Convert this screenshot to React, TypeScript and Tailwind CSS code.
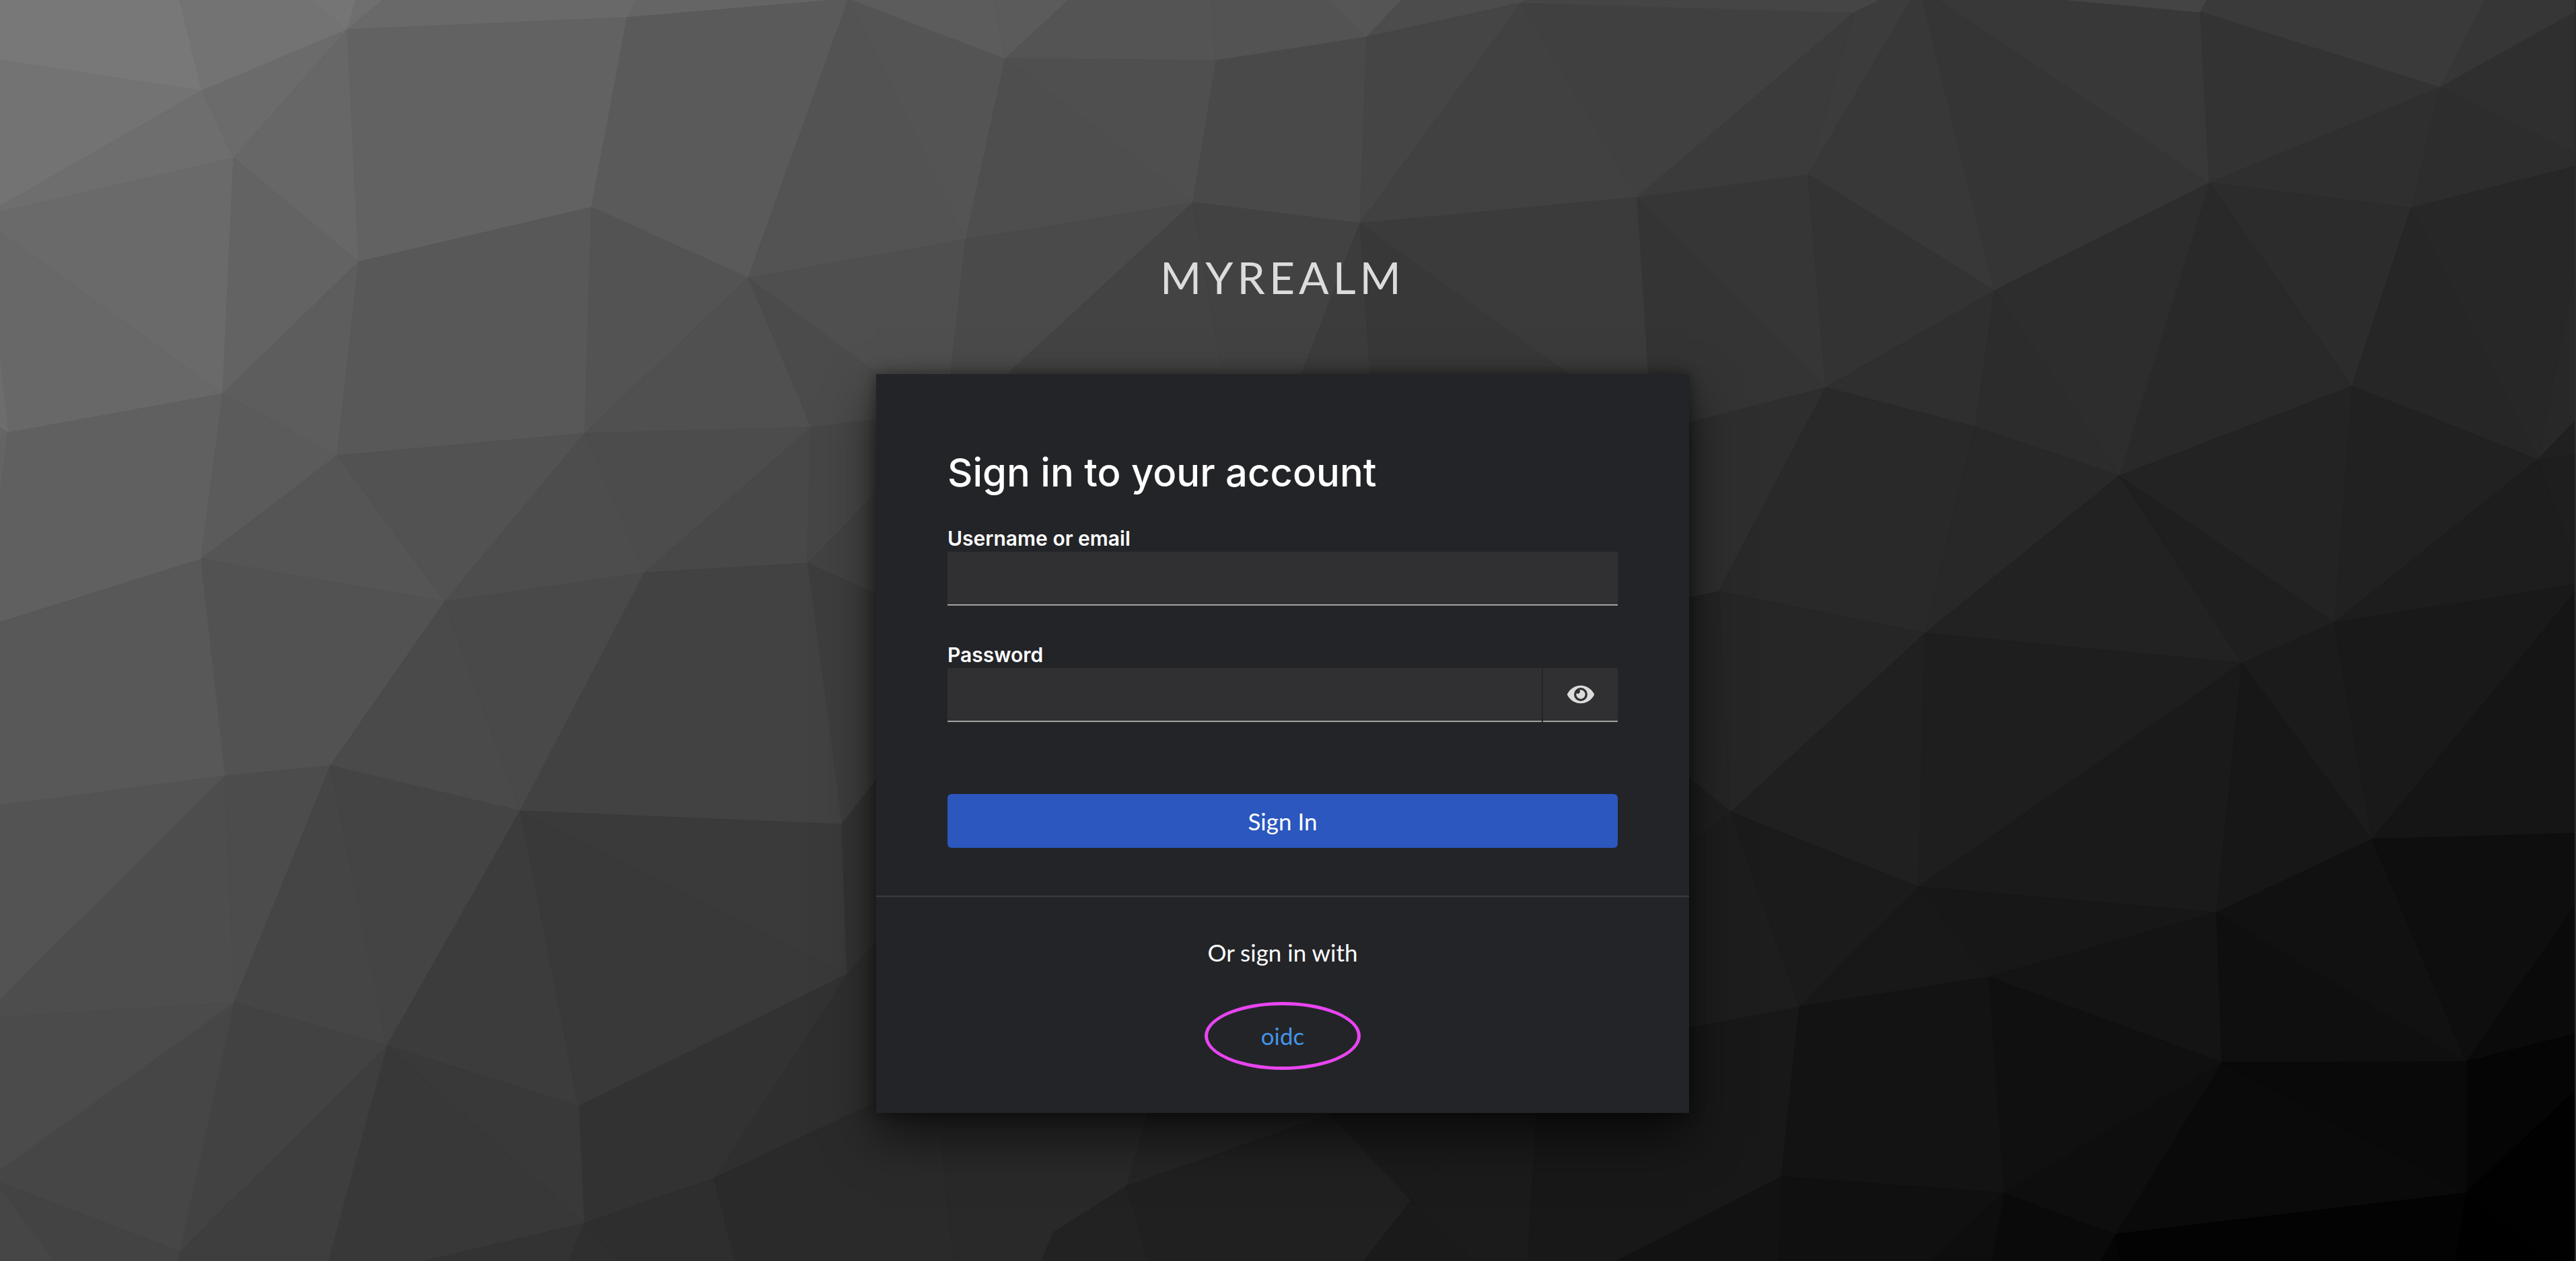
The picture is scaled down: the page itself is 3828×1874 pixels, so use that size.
import { useState } from 'react';
import type { FormEvent } from 'react';
import { FaEye } from 'react-icons/fa';

/* Facets of the low-poly backdrop: [fill, points] on a 3828 x 1874 canvas. */
const facets: [string, string][] = [
  // top left
  ['#787878', '0,0 268,0 301,135 0,89'],
  ['#737373', '268,0 463,0 517,44 301,135'],
  ['#757575', '463,0 530,0 517,44'],
  ['#6f6f6f', '530,0 570,0 517,44'],
  ['#696969', '570,0 947,0 933,26 517,44'],
  ['#656565', '947,0 1262,0 933,26'],
  ['#737373', '0,89 301,135 0,307'],
  ['#6e6e6e', '0,307 301,135 348,235 0,315'],
  ['#6b6b6b', '301,135 517,44 348,235'],
  ['#676767', '517,44 348,235 534,389'],
  ['#626262', '517,44 933,26 880,308 534,389'],
  ['#5a5a5a', '933,26 1262,-2 1113,413 880,308'],
  ['#535353', '1262,-2 1113,413 1436,356'],
  ['#545454', '1262,-2 1495,87 1436,356'],
  ['#6a6a6a', '0,315 348,235 332,585 0,344'],
  ['#686868', '0,344 332,585 13,643 0,526'],
  ['#6d6d6d', '0,526 13,643 0,635'],
  ['#666666', '0,635 13,643 0,655'],
  ['#646464', '0,655 13,643 0,743'],
  ['#636363', '348,235 534,389 332,585'],
  ['#5d5d5d', '534,389 332,585 502,677'],
  ['#585858', '534,389 880,308 870,644 502,677'],
  ['#535353', '880,308 1113,413 870,644'],
  ['#606060', '13,643 332,585 300,831 0,925 0,743'],
  ['#5b5b5b', '332,585 502,677 300,831'],
  ['#555555', '502,677 300,831 662,894'],
  ['#525252', '502,677 870,644 662,894'],
  ['#505050', '1113,413 870,644 1207,635'],
  ['#4f4f4f', '1113,413 1436,356 1411,600 1330,600'],
  ['#4b4b4b', '1113,413 1330,573 1330,620 1207,635'],
  ['#4c4c4c', '870,644 1207,635 959,851'],
  ['#4d4d4d', '870,644 662,894 959,851'],
  ['#484848', '1207,635 1201,837 959,851'],
  ['#464646', '1207,635 1330,620 1330,706 1201,837'],
  ['#424242', '1201,837 1330,706 1330,895'],
  ['#3d3d3d', '1201,837 1330,895 1330,1125 1252,1225'],
  ['#585858', '0,925 300,831 336,1153 0,1197'],
  ['#525252', '300,831 662,894 492,1138 336,1153'],
  // bottom left
  ['#4a4a4a', '662,894 492,1138 774,1205'],
  ['#494949', '662,894 959,851 774,1205'],
  ['#424242', '959,851 1201,837 1252,1225 774,1205'],
  ['#535353', '0,1197 336,1153 0,1487'],
  ['#4d4d4d', '336,1153 0,1487 0,1512 349,1490'],
  ['#4c4c4c', '336,1153 492,1138 349,1490'],
  ['#454545', '492,1138 349,1490 576,1554'],
  ['#444444', '492,1138 576,1554 774,1205'],
  ['#3c3c3c', '774,1205 576,1554 861,1644'],
  ['#393939', '774,1205 861,1644 1260,1448'],
  ['#3a3a3a', '774,1205 1252,1225 1260,1448'],
  ['#333333', '1252,1225 1330,1125 1330,1370 1260,1448'],
  ['#2f2f2f', '1260,1448 1330,1370 1330,1640 1062,1751'],
  ['#323232', '861,1644 1260,1448 1062,1751 869,1818'],
  ['#393939', '576,1554 861,1644 869,1818'],
  ['#383838', '576,1554 869,1818 606,1880 487,1880'],
  ['#3e3e3e', '576,1554 487,1880 265,1880 268,1860'],
  ['#424242', '349,1490 576,1554 268,1860'],
  ['#464646', '349,1490 268,1860 0,1757 0,1739'],
  ['#4b4b4b', '0,1512 349,1490 0,1739'],
  ['#434343', '0,1757 268,1860 265,1880 86,1880 0,1765'],
  ['#464646', '0,1765 86,1880 0,1880'],
  ['#333333', '869,1818 606,1880 844,1880'],
  ['#2f2f2f', '869,1818 844,1880 926,1880'],
  ['#2e2e2e', '869,1818 1062,1751 1095,1880 926,1880'],
  // bottom middle
  ['#2a2a2a', '1062,1751 1095,1880 1419,1880 1393,1630 1320,1630'],
  ['#292929', '1393,1630 1419,1880 1546,1880 1567,1831 1675,1763 1713,1630'],
  ['#252525', '1713,1630 1675,1763 1978,1656 1978,1630'],
  ['#202020', '1675,1763 1978,1656 2098,1784'],
  ['#222222', '1567,1831 1546,1880 1709,1880 1675,1763'],
  ['#202020', '1675,1763 1709,1880 2023,1880 2098,1784'],
  ['#1b1b1b', '1978,1656 1978,1630 2218,1630 2098,1784'],
  ['#1b1b1b', '2098,1784 2218,1630 2286,1630 2271,1880 2197,1880'],
  ['#1a1a1a', '2098,1784 2023,1880 2197,1880'],
  ['#181818', '2286,1630 2480,1630 2480,1533 2675,1496 2648,1749 2392,1880 2271,1880'],
  ['#121212', '2648,1749 2392,1880 2646,1880'],
  // top middle
  ['#5c5c5c', '1262,-2 1478,0 1495,87'],
  ['#5b5b5b', '1478,0 1589,0 1495,87'],
  ['#545454', '1589,0 1801,0 1808,90 1495,87'],
  ['#535353', '1801,0 1975,0 2032,55 1808,90'],
  ['#565656', '1975,0 2021,0 2032,55'],
  ['#555555', '2021,0 2084,0 2032,55'],
  ['#4c4c4c', '2084,0 2270,0 2262,4 2032,55'],
  ['#4e4e4e', '1495,87 1774,301 1436,356'],
  ['#4f4f4f', '1495,87 1808,90 1774,301'],
  ['#494949', '1808,90 2032,55 2022,332 1774,301'],
  ['#454545', '2032,55 2262,4 2022,332'],
  ['#414141', '2262,4 2022,332 2434,293'],
  ['#404040', '2262,4 2756,19 2434,293'],
  ['#454545', '2270,0 2795,0 2756,19 2262,4'],
  ['#4a4a4a', '1436,356 1774,301 1450,600 1409,600'],
  ['#434343', '1774,301 1450,600 1825,600'],
  ['#424242', '1774,301 2022,332 1918,600 1825,600'],
  ['#3c3c3c', '2022,332 1918,600 2040,600'],
  ['#383838', '2022,332 2040,600 2394,600'],
  ['#3b3b3b', '2022,332 2434,293 2456,600 2394,600'],
  ['#343434', '2434,293 2714,576 2480,640 2456,640'],
  // top right
  ['#363636', '2434,293 2688,259 2714,576'],
  ['#3b3b3b', '2434,293 2756,19 2688,259'],
  ['#3c3c3c', '2756,19 2795,0 2853,-20 2688,259'],
  ['#383838', '2853,-20 2688,259 2965,432'],
  ['#353535', '2853,-20 2965,432 3284,272'],
  ['#383838', '2853,-20 3284,272 3271,18'],
  ['#444444', '3073,0 3281,0 3271,18'],
  ['#3a3a3a', '3281,0 3694,0 3627,130 3271,18'],
  ['#363636', '3694,0 3828,0 3828,18 3627,130'],
  ['#2f2f2f', '3627,130 3828,18 3828,228'],
  ['#2d2d2d', '3627,130 3828,228 3828,247 3584,309'],
  ['#333333', '3271,18 3627,130 3284,272'],
  ['#2f2f2f', '3284,272 3627,130 3584,309'],
  ['#2c2c2c', '3284,272 3584,309 3496,574'],
  ['#292929', '3284,272 3496,574 3150,707'],
  ['#2d2d2d', '2965,432 3284,272 3150,707'],
  ['#333333', '2688,259 2965,432 2714,576'],
  ['#2f2f2f', '2965,432 2714,576 2936,634'],
  ['#2c2c2c', '2965,432 2936,634 3150,707'],
  ['#262626', '3584,309 3496,574 3772,683'],
  ['#272727', '3584,309 3828,247 3828,400 3772,683'],
  ['#282828', '3772,683 3828,400 3828,625'],
  ['#202020', '3772,683 3828,625 3828,676'],
  ['#212121', '3496,574 3772,683 3470,925'],
  ['#232323', '3496,574 3150,707 3470,925'],
  ['#1d1d1d', '3772,683 3470,925 3838,867'],
  ['#1e1e1e', '3772,683 3838,676 3838,867'],
  ['#2e2e2e', '2714,576 2555,879 2480,895 2480,636'],
  ['#292929', '2714,576 2936,634 2862,941 2555,879'],
  ['#282828', '2936,634 3150,707 2862,941'],
  // bottom right
  ['#222222', '3150,707 2862,941 3333,985'],
  ['#1f1f1f', '3150,707 3333,985 3470,925'],
  ['#262626', '2555,879 2862,941 2573,1207'],
  ['#252525', '2555,879 2573,1207 2480,1130 2480,895'],
  ['#1f1f1f', '2573,1207 2480,1130 2480,1280'],
  ['#1d1d1d', '2573,1207 2480,1280 2480,1533 2675,1496'],
  ['#202020', '2862,941 2573,1207 2852,1318'],
  ['#1e1e1e', '2862,941 2852,1318 3333,985'],
  ['#1a1a1a', '3333,985 2852,1318 3295,1356'],
  ['#171717', '3333,985 3295,1356 3526,1247'],
  ['#1b1b1b', '3333,985 3470,925 3526,1247'],
  ['#191919', '3470,925 3838,867 3526,1247'],
  ['#151515', '3526,1247 3838,867 3838,1238'],
  ['#1b1b1b', '2573,1207 2852,1318 2675,1496'],
  ['#181818', '2852,1318 2675,1496 2956,1452'],
  ['#171717', '2852,1318 2956,1452 3295,1356'],
  ['#141414', '2956,1452 3295,1356 3303,1579'],
  ['#0f0f0f', '3295,1356 3303,1579 3666,1578'],
  ['#111111', '3295,1356 3526,1247 3666,1578'],
  ['#0e0e0e', '3526,1247 3838,1238 3838,1331 3666,1578'],
  ['#0a0a0a', '3666,1578 3838,1331 3838,1534'],
  ['#050505', '3666,1578 3838,1534 3838,1612 3665,1773'],
  ['#010101', '3665,1773 3838,1612 3838,1880 3796,1880'],
  ['#000000', '3665,1773 3648,1880 3796,1880'],
  ['#090909', '3303,1579 3666,1578 3665,1773'],
  ['#0a0a0a', '3303,1579 3665,1773 3145,1834'],
  ['#030303', '3145,1834 3665,1773 3648,1880 3152,1880'],
  ['#050505', '3145,1834 3118,1880 3152,1880'],
  ['#0a0a0a', '2979,1773 3145,1834 3118,1880 2959,1880'],
  ['#0e0e0e', '2979,1773 3303,1579 3145,1834'],
  ['#101010', '2956,1452 3303,1579 2979,1773'],
  ['#131313', '2675,1496 2956,1452 2979,1773 2648,1749'],
  ['#101010', '2648,1749 2979,1773 2864,1880 2646,1880'],
  ['#0e0e0e', '2979,1773 2864,1880 2959,1880'],
];

function Backdrop() {
  return (
    <svg
      className="absolute inset-0 -z-10 h-full w-full"
      viewBox="0 0 3828 1874"
      preserveAspectRatio="xMidYMid slice"
      aria-hidden="true"
    >
      {facets.map(([fill, points]) => (
        <polygon key={points} points={points} fill={fill} stroke={fill} strokeWidth="1" strokeLinejoin="round" />
      ))}
    </svg>
  );
}

const labelClass = "block font-['Inter','Liberation_Sans',sans-serif] text-[30px] leading-10 font-semibold text-white";
const inputClass =
  'block h-20 w-full min-w-0 border-b-2 border-[#a3a3a3] bg-[#303032] px-4 text-[35px] text-white outline-none';

export default function App() {
  const [visible, setVisible] = useState(false);
  const submit = (e: FormEvent) => e.preventDefault();

  return (
    <div className="relative isolate flex min-h-screen flex-col items-center overflow-hidden border-r-2 border-[#2c2c2c] bg-black pr-[14px] font-['Lato','Liberation_Sans',sans-serif]">
      <Backdrop />
      <header className="pt-[366px] pb-[98px]">
        <h1 className="text-[66px] leading-[92px] tracking-[6px] text-[#dcdcdc] uppercase">myrealm</h1>
      </header>

      <main className="w-full max-w-[1208px] bg-[#232428] shadow-[0_35px_70px_rgba(0,0,0,0.6),0_0_20px_rgba(0,0,0,0.45)]">
        <form className="px-[106px] pt-[106px] pb-[71px]" onSubmit={submit}>
          <h2 className="font-['Inter','Liberation_Sans',sans-serif] text-[58px] leading-[80px] font-medium text-white">
            Sign in to your account
          </h2>

          <div className="mt-[38px]">
            <label htmlFor="username" className={labelClass}>Username or email</label>
            <input id="username" type="text" autoComplete="username" className={inputClass} />
          </div>

          <div className="mt-[53px]">
            <label htmlFor="password" className={labelClass}>Password</label>
            <div className="flex gap-0.5">
              <input
                id="password"
                type={visible ? 'text' : 'password'}
                autoComplete="current-password"
                className={inputClass}
              />
              <button
                type="button"
                aria-label="Show password"
                onClick={() => setVisible(!visible)}
                className="flex h-20 w-[111px] shrink-0 items-center justify-center border-b-2 border-[#a3a3a3] bg-[#303032] text-[#dcdcdc]"
              >
                <FaEye className="h-9 w-10" />
              </button>
            </div>
          </div>

          <button type="submit" className="mt-[107px] h-20 w-full rounded-md bg-[#2b57be] text-[35px] text-white">
            Sign In
          </button>
        </form>

        <section className="flex flex-col items-center border-t-2 border-[#3a3b3f] pt-14 pb-16">
          <h3 className="text-[35px] leading-[52px] text-white">Or sign in with</h3>
          <a
            href="#oidc"
            className="mt-12 flex h-[101px] w-[232px] items-center justify-center rounded-[50%] border-[5px] border-[#e845f0] text-[35px] text-[#4394e5]"
          >
            oidc
          </a>
        </section>
      </main>
    </div>
  );
}
